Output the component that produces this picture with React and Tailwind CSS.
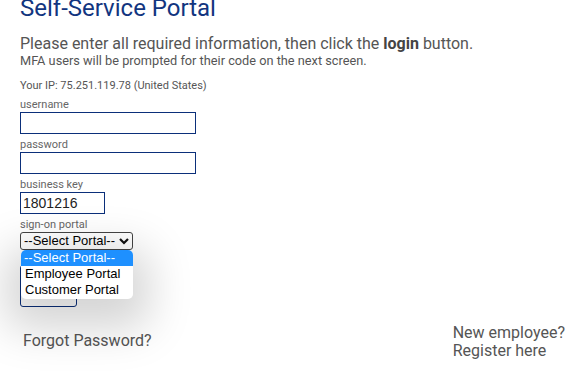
export default function App() {
    const label = "text-[11px] leading-[13px] text-[#666]";
    const box = "block border border-[#0b2f7a] bg-white outline-none font-['Liberation_Sans',Arial,sans-serif]";

    return (
        <div className="w-[566px] h-[371px] overflow-hidden bg-white relative font-['Roboto',sans-serif]">
            <div className="pl-5">
                <h1 className="text-[24px] leading-[28px] text-[#12357f] -mt-[6px]">Self-Service Portal</h1>

                <p className="mt-[13px] text-[16px] leading-[18px] text-[#555]">
                    Please enter all required information, then click the <b className="font-bold text-[#444]">login</b> button.
                </p>
                <p className="mt-[1px] text-[12.75px] leading-[14px] text-[#555]">
                    MFA users will be prompted for their code on the next screen.
                </p>
                <p className="mt-[11px] text-[11px] leading-[13px] text-[#555]">
                    Your IP: 75.251.119.78 (United States)
                </p>

                <div className="mt-[6px] flex flex-col">
                    <span className={label}>username</span>
                    <input className={`${box} w-[176px] h-[22px] mt-[1px]`} />
                    <span className={`${label} mt-[4px]`}>password</span>
                    <input type="password" className={`${box} w-[176px] h-[22px] mt-[1px]`} />
                    <span className={`${label} mt-[4px]`}>business key</span>
                    <input defaultValue="1801216" className={`${box} w-[85px] h-[22px] mt-[1px] px-[2px] text-[14px] text-[#222]`} />
                    <span className={`${label} mt-[4px]`}>sign-on portal</span>
                    <div className="relative mt-[1px]">
                        <div className="w-[113px] h-[18px] border border-[#444] rounded-[3px] flex items-center justify-between px-[3px] text-[13px] text-black font-['Liberation_Sans',Arial,sans-serif]">
                            <span>--Select Portal--</span>
                            <svg width="10" height="7" viewBox="0 0 10 7" fill="none" stroke="#111" strokeWidth="2.2">
                                <path d="M1 1l4 4 4-4" />
                            </svg>
                        </div>

                        <button className="mt-[15px] w-[57px] h-[42px] border border-[#0b2f7a] rounded-[3px] bg-white flex items-end justify-center pb-[6px]">
                            <svg width="12" height="10" viewBox="0 0 12 10" fill="none" stroke="#0b2f7a" strokeWidth="2.4">
                                <path d="M2 2c1 4 7 4 8 0" />
                            </svg>
                        </button>

                        <div className="absolute left-[1px] top-[18px] w-[112px] rounded-[5px] bg-white overflow-hidden shadow-[0_14px_44px_16px_rgba(0,0,0,0.17)] text-[13px] leading-[16px] font-['Liberation_Sans',Arial,sans-serif]">
                            <div className="bg-[#1e90ff] text-white px-[3px]">--Select Portal--</div>
                            <div className="text-black px-[4px]">Employee Portal</div>
                            <div className="text-black px-[4px] pb-[1px]">Customer Portal</div>
                        </div>
                    </div>
                </div>
            </div>

            <div className="flex justify-between items-start mt-[17px] pl-[23px] pr-[1px]">
                <a className="mt-[8px] text-[16px] leading-[18px] text-[#555]">Forgot Password?</a>
                <div className="text-[16px] leading-[18px] text-[#555]">
                    <div>New employee?</div>
                    <div>Register here</div>
                </div>
            </div>
        </div>
    );
}
